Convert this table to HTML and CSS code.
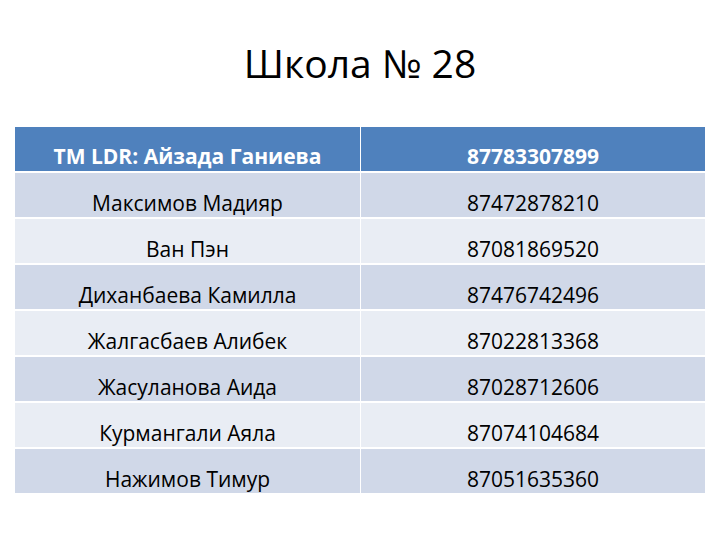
FILE: index.html
```html
<!DOCTYPE html>
<html lang="ru">
<head>
<meta charset="utf-8">
<title>Школа № 28</title>
<link rel="stylesheet" href="styles.css">
</head>
<body>
<div class="slide">
  <h1 class="title">Школа № 28</h1>
  <div class="table">
    <div class="row head"><div class="cell">TM LDR: Айзада Ганиева</div><div class="cell">87783307899</div></div>
    <div class="row odd"><div class="cell">Максимов Мадияр</div><div class="cell">87472878210</div></div>
    <div class="row even"><div class="cell">Ван Пэн</div><div class="cell">87081869520</div></div>
    <div class="row odd"><div class="cell">Диханбаева Камилла</div><div class="cell">87476742496</div></div>
    <div class="row even"><div class="cell">Жалгасбаев Алибек</div><div class="cell">87022813368</div></div>
    <div class="row odd"><div class="cell">Жасуланова Аида</div><div class="cell">87028712606</div></div>
    <div class="row even"><div class="cell">Курмангали Аяла</div><div class="cell">87074104684</div></div>
    <div class="row odd"><div class="cell">Нажимов Тимур</div><div class="cell">87051635360</div></div>
  </div>
</div>
</body>
</html>
```
FILE: styles.css
```css
html, body {
  margin: 0;
  padding: 0;
  background: #ffffff;
}
.slide {
  width: 720px;
  height: 540px;
  font-family: "Open Sans", "Noto Sans", sans-serif;
  color: #000;
}
.title {
  margin: 0;
  height: 127px;
  box-sizing: border-box;
  padding-top: 38px;
  font-size: 39px;
  font-weight: 400;
  line-height: 50px;
  text-align: center;
}
.table {
  margin-left: 15px;
  width: 690px;
}
.row {
  display: grid;
  grid-template-columns: 345px 344px;
  column-gap: 1px;
  height: 46px;
  box-sizing: border-box;
  border-bottom: 2px solid #ffffff;
}
.cell {
  display: flex;
  align-items: flex-end;
  justify-content: center;
  font-size: 21px;
  line-height: 24px;
  padding-bottom: 2px;
  box-sizing: border-box;
}
.head {
  border-bottom-width: 2px;
}
.head .cell {
  background: #4f81bd;
  color: #ffffff;
  font-weight: 700;
  padding-bottom: 3px;
}
.odd .cell {
  background: #d0d8e8;
}
.even .cell {
  background: #e9edf4;
}
```
